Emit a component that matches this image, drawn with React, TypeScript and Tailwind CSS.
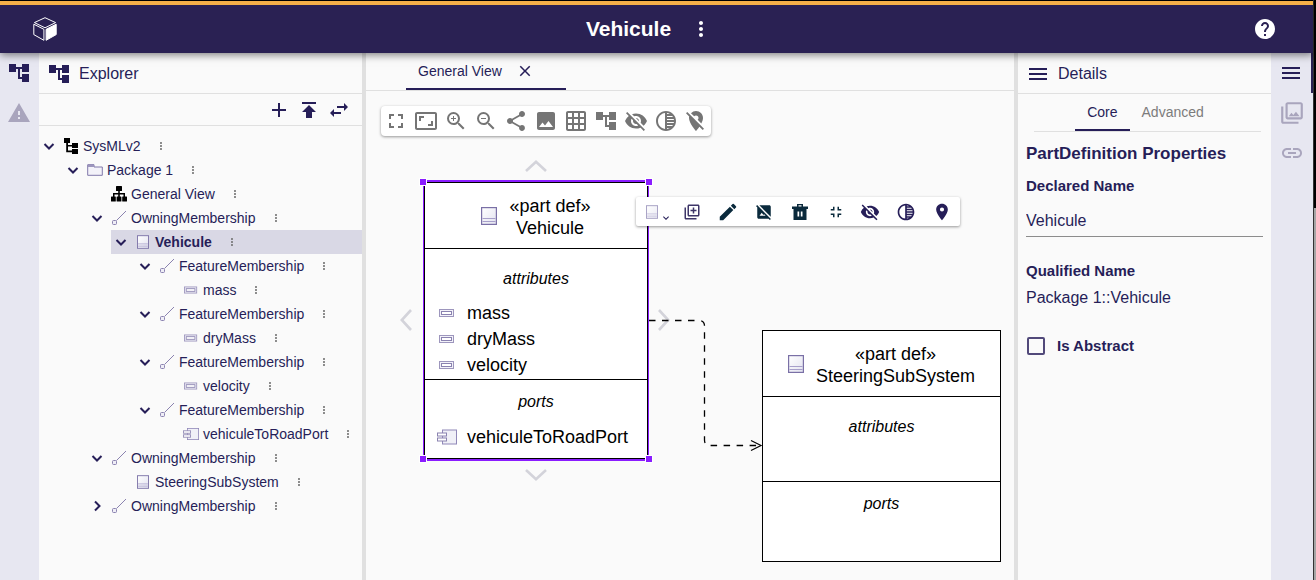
import React, { useState } from "react";
import {
  MdAccountTree,
  MdAdd,
  MdAspectRatio,
  MdClose,
  MdEdit,
  MdExpandMore,
  MdFullscreen,
  MdFullscreenExit,
  MdGridOn,
  MdHelp,
  MdHideImage,
  MdImage,
  MdLink,
  MdLocationOff,
  MdMenu,
  MdMoreVert,
  MdOutlineLibraryAdd,
  MdOutlinePhotoLibrary,
  MdPlace,
  MdPublish,
  MdShare,
  MdSwapHoriz,
  MdTonality,
  MdVisibilityOff,
  MdWarning,
  MdZoomIn,
  MdZoomOut,
} from "react-icons/md";

type IconProps = { className?: string };

function Logo() {
  return (
    <svg className="size-6" viewBox="0 0 24 24" fill="none" stroke="white" strokeWidth="1" strokeLinejoin="round">
      <path d="M12 .7 22.6 5.600 12 10.800 1.400 5.600Z" />
      <path d="M.8 7.200 10.900 12.300V23.300L.8 17.600Z" />
      <path d="M13.100 12.300 23.200 7.200V17.600L13.100 23.300Z" fill="white" />
    </svg>
  );
}

function PartIcon({ className }: IconProps) {
  return (
    <svg className={className} viewBox="0 0 16 18">
      <defs>
        <linearGradient id="part-fill" x1="0" y1="0" x2="1" y2="1">
          <stop offset="0" stopColor="#ffffff" />
          <stop offset="1" stopColor="#e2e2ef" />
        </linearGradient>
      </defs>
      <rect x=".6" y=".6" width="14.800" height="16.800" fill="url(#part-fill)" stroke="#7a70a6" strokeWidth="1.200" />
      <path d="M1.500 11.500H14.500M1.500 14.500H14.500" stroke="#a79fca" strokeWidth="1" />
    </svg>
  );
}

function AttributeIcon({ className }: IconProps) {
  return (
    <svg className={className} viewBox="0 0 16 16">
      <rect x=".5" y="4.500" width="14" height="7" fill="#f3f2f9" stroke="#9d96bd" />
      <rect x="2.500" y="6.500" width="10" height="3" fill="#fff" stroke="#8a82b0" />
    </svg>
  );
}

function PortIcon({ className }: IconProps) {
  return (
    <svg className={className} viewBox="0 0 20 16">
      <rect x="5.500" y="1" width="14" height="14" fill="#f0f0f7" stroke="#9088b8" />
      <rect x=".5" y="4" width="9" height="3" fill="#fff" stroke="#8a82b0" />
      <rect x=".5" y="9" width="9" height="3" fill="#fff" stroke="#8a82b0" />
    </svg>
  );
}

function MembershipIcon({ className }: IconProps) {
  return (
    <svg className={className} viewBox="0 0 16 16" fill="none">
      <path d="M5.500 10.500 15 1" stroke="#7d74a6" strokeWidth=".9" />
      <rect x="1.500" y="10.500" width="4" height="4" rx="1" fill="#efeef6" stroke="#8a82b0" />
    </svg>
  );
}

function PackageIcon({ className }: IconProps) {
  return (
    <svg className={className} viewBox="0 0 16 16">
      <path d="M.7 13.300V2.700H7V5H15.300V13.300Z" fill="#f3f2f9" stroke="#8078aa" />
      <path d="M1 3H7V5H1Z" fill="#9d96bd" />
    </svg>
  );
}

function ModelIcon({ className }: IconProps) {
  return (
    <svg className={className} viewBox="0 0 16 16" fill="black">
      <path d="M1 0H7V5H5V7H9V5H15V10H9V8.500H5V12.500H9V11H15V16H9V14.200H3.200V5H1Z" />
    </svg>
  );
}

function ViewIcon({ className }: IconProps) {
  return (
    <svg className={className} viewBox="0 0 16 16" fill="black">
      <rect x="5" y="0" width="6" height="5" rx=".5" />
      <path d="M7.200 5H8.800V7H14V11H12.500V8.500H8.800V11H7.200V8.500H3.500V11H2V7H7.200Z" />
      <rect x="0" y="10.500" width="4.800" height="5" rx=".5" />
      <rect x="5.600" y="10.500" width="4.800" height="5" rx=".5" />
      <rect x="11.200" y="10.500" width="4.800" height="5" rx=".5" />
    </svg>
  );
}

function TrashIcon({ className }: IconProps) {
  return (
    <svg className={className} viewBox="0 0 18 18" fill="currentColor" fillRule="evenodd">
      <path d="M6 1H12V3.500H17V6H1V3.500H6ZM7.500 2.300V3.500H10.500V2.300Z" />
      <path d="M2.500 6H15.500V17H2.500ZM6.500 8.500V13.500H8.200V8.500ZM9.800 8.500V13.500H11.500V8.500Z" />
    </svg>
  );
}

function ToggleIcon({ className }: IconProps) {
  return (
    <svg className={`size-4 ${className}`} viewBox="0 0 16 16" fill="none" stroke="currentColor" strokeWidth="2">
      <path d="M3.500 6 8 10.500 12.500 6" />
    </svg>
  );
}

type Kind = "model" | "package" | "view" | "membership" | "part" | "attribute" | "port";

const kindIcons: Record<Kind, React.ReactNode> = {
  model: <ModelIcon className="size-4" />,
  package: <PackageIcon className="size-4" />,
  view: <ViewIcon className="size-4" />,
  membership: <MembershipIcon className="size-4" />,
  part: <PartIcon className="h-3.5 w-3" />,
  attribute: <AttributeIcon className="size-3.5" />,
  port: <PortIcon className="h-3.5 w-4" />,
};

type Row = { level: number; kind: Kind; label: string; state?: "open" | "closed"; selected?: boolean };

const rows: Row[] = [
  { level: 0, kind: "model", label: "SysMLv2", state: "open" },
  { level: 1, kind: "package", label: "Package 1", state: "open" },
  { level: 2, kind: "view", label: "General View" },
  { level: 2, kind: "membership", label: "OwningMembership", state: "open" },
  { level: 3, kind: "part", label: "Vehicule", state: "open", selected: true },
  { level: 4, kind: "membership", label: "FeatureMembership", state: "open" },
  { level: 5, kind: "attribute", label: "mass" },
  { level: 4, kind: "membership", label: "FeatureMembership", state: "open" },
  { level: 5, kind: "attribute", label: "dryMass" },
  { level: 4, kind: "membership", label: "FeatureMembership", state: "open" },
  { level: 5, kind: "attribute", label: "velocity" },
  { level: 4, kind: "membership", label: "FeatureMembership", state: "open" },
  { level: 5, kind: "port", label: "vehiculeToRoadPort" },
  { level: 2, kind: "membership", label: "OwningMembership", state: "open" },
  { level: 3, kind: "part", label: "SteeringSubSystem" },
  { level: 2, kind: "membership", label: "OwningMembership", state: "closed" },
];

const indents = ["ml-0", "ml-6", "ml-12", "ml-18", "ml-24", "ml-30"];

function IconButton({ label, className = "", children }: { label: string; className?: string; children: React.ReactNode }) {
  return (
    <button type="button" aria-label={label} className={`flex shrink-0 items-center justify-center ${className}`}>
      {children}
    </button>
  );
}

function TreeRow({ row }: { row: Row }) {
  return (
    <li
      role="treeitem"
      aria-level={row.level + 1}
      aria-selected={!!row.selected}
      className={`flex h-6 items-center ${indents[row.level]} ${row.selected ? "bg-[#d9d8e5] font-bold" : ""}`}
    >
      <span className="flex w-6 shrink-0">
        {row.state && (
          <IconButton label={row.state === "open" ? "Collapse" : "Expand"} className="w-5">
            <ToggleIcon className={row.state === "open" ? "" : "-rotate-90"} />
          </IconButton>
        )}
      </span>
      <span className="flex w-5 shrink-0 items-center justify-center pr-1">{kindIcons[row.kind]}</span>
      <span className="whitespace-nowrap">{row.label}</span>
      <IconButton label={`${row.label} actions`} className="ml-3.5 text-[#757575]">
        <MdMoreVert className="size-3" />
      </IconButton>
    </li>
  );
}

function Explorer() {
  return (
    <aside className="flex w-[323px] shrink-0 flex-col">
      <header className="flex h-[41px] items-center gap-2 border-b border-[#e0e0e0] pt-px pl-2">
        <MdAccountTree className="size-6" />
        <h2 className="text-base">Explorer</h2>
      </header>
      <div className="flex h-8 items-center justify-end gap-1.5 border-b border-[#e0e0e0] pr-[11px]">
        <IconButton label="New model"><MdAdd className="size-6" /></IconButton>
        <IconButton label="Upload model"><MdPublish className="size-6" /></IconButton>
        <IconButton label="Synchronize"><MdSwapHoriz className="size-6" /></IconButton>
      </div>
      <ul role="tree" className="pt-2 text-sm">
        {rows.map((row, i) => (
          <TreeRow key={i} row={row} />
        ))}
      </ul>
    </aside>
  );
}

const diagramTools: [string, React.ReactNode][] = [
  ["Full screen", <MdFullscreen className="size-6" />],
  ["Fit to screen", <MdAspectRatio className="size-6" />],
  ["Zoom in", <MdZoomIn className="size-6" />],
  ["Zoom out", <MdZoomOut className="size-6" />],
  ["Share", <MdShare className="size-6" />],
  ["Export image", <MdImage className="size-6" />],
  ["Snap to grid", <MdGridOn className="size-6" />],
  ["Arrange all", <MdAccountTree className="size-6" />],
  ["Reveal hidden elements", <MdVisibilityOff className="size-6" />],
  ["Reveal faded elements", <MdTonality className="size-6" />],
  ["Unpin all", <MdLocationOff className="size-6" />],
];

const objectTools: [string, React.ReactNode][] = [
  ["New object", <MdOutlineLibraryAdd className="size-[18px] text-[#3d3568]" />],
  ["Edit", <MdEdit className="size-[22px] text-[#0a2a3c]" />],
  ["Delete from diagram", <MdHideImage className="size-[18px] text-[#0a2a3c]" />],
  ["Delete from model", <TrashIcon className="size-[18px] text-[#0a2a3c]" />],
  ["Collapse", <MdFullscreenExit className="size-[18px] text-[#0a2a3c]" />],
];

const displayTools: [string, React.ReactNode][] = [
  ["Hide", <MdVisibilityOff className="size-5" />],
  ["Fade", <MdTonality className="size-5" />],
  ["Pin", <MdPlace className="size-5" />],
];

function NodeHeader({ name }: { name: string }) {
  return (
    <div className="flex h-[66px] items-center justify-center gap-3 border-b border-black">
      <PartIcon className="h-[18px] w-4" />
      <p className="pt-0.5 text-center text-lg leading-[22px]">
        «part def»
        <br />
        {name}
      </p>
    </div>
  );
}

function NodeItem({ icon, label }: { icon: React.ReactNode; label: string }) {
  return (
    <li className="flex h-[26px] items-center text-lg">
      <span className="flex w-[42px] justify-center pl-0.5">{icon}</span>
      {label}
    </li>
  );
}

function Handle({ className }: IconProps) {
  return <span className={`absolute size-2 border border-white bg-[#8a1cff] ${className}`} />;
}

function Chevron({ className }: IconProps) {
  return (
    <svg className={`absolute h-3 w-6 ${className}`} viewBox="0 0 24 12" fill="none" stroke="#d3d3da" strokeWidth="2.600">
      <path d="M2 11 12 1.800 22 11" />
    </svg>
  );
}

function Diagram() {
  return (
    <div className="relative grow overflow-hidden text-black">
      <div
        role="toolbar"
        aria-label="Diagram"
        className="absolute top-[15px] left-[15px] flex h-[30px] items-center gap-1.5 rounded bg-white px-[3px] text-[#757575] shadow-[0_1px_3px_rgba(0,0,0,0.4)]"
      >
        {diagramTools.map(([label, icon]) => (
          <IconButton key={label} label={label}>{icon}</IconButton>
        ))}
      </div>

      <Chevron className="top-[69px] left-[158px]" />
      <Chevron className="top-[378px] left-[158px] rotate-180" />
      <Chevron className="top-[223px] left-[28px] -rotate-90" />
      <Chevron className="top-[223px] left-[286px] rotate-90" />

      <svg className="absolute top-[224px] left-[283px] h-[140px] w-[115px]" viewBox="0 0 115 140" fill="none" stroke="black">
        <path d="M0 5.500H50Q55.500 5.500 55.500 11V125Q55.500 130.500 61 130.500H112" strokeWidth="1.300" strokeDasharray="6.500 6.500" />
        <path d="M102 125.500 112 130.500 102 135.500" strokeWidth="1.200" />
      </svg>

      <section className="absolute top-[89px] left-[57px] w-[226px] border-x border-y-2 border-[#8a1cff] bg-white">
        <div className="border border-black">
          <NodeHeader name="Vehicule" />
          <div className="h-[131px] border-b border-black">
            <h3 className="pt-[18px] text-center text-base leading-6 italic">attributes</h3>
            <ul className="pt-[9px]">
              <NodeItem icon={<AttributeIcon className="size-4" />} label="mass" />
              <NodeItem icon={<AttributeIcon className="size-4" />} label="dryMass" />
              <NodeItem icon={<AttributeIcon className="size-4" />} label="velocity" />
            </ul>
          </div>
          <div className="h-[78px]">
            <h3 className="pt-2.5 text-center text-base leading-6 italic">ports</h3>
            <ul className="pt-2.5">
              <NodeItem icon={<PortIcon className="h-4 w-5" />} label="vehiculeToRoadPort" />
            </ul>
          </div>
        </div>
        <Handle className="-top-1 -left-[5px]" />
        <Handle className="-top-1 -right-[5px]" />
        <Handle className="-bottom-1 -left-[5px]" />
        <Handle className="-right-[5px] -bottom-1" />
      </section>

      <section className="absolute top-[239px] left-[396px] w-[239px] border border-black bg-white">
        <NodeHeader name="SteeringSubSystem" />
        <div className="h-[85px] border-b border-black">
          <h3 className="pt-[18px] text-center text-base leading-6 italic">attributes</h3>
        </div>
        <div className="h-[79px]">
          <h3 className="pt-2.5 text-center text-base leading-6 italic">ports</h3>
        </div>
      </section>

      <div
        role="toolbar"
        aria-label="Vehicule"
        className="absolute top-[106px] left-[270px] flex h-[29px] items-center rounded-xs bg-white pl-2 text-[#261e58] shadow-[0_1px_3px_rgba(0,0,0,0.4)]"
      >
        <IconButton label="Creation tools" className="w-[30px] gap-0.5">
          <PartIcon className="h-3.5 w-3 opacity-70" />
          <MdExpandMore className="mt-3 size-3" />
        </IconButton>
        <div className="flex">
          {objectTools.map(([label, icon]) => (
            <IconButton key={label} label={label} className="h-7 w-9">{icon}</IconButton>
          ))}
        </div>
        <div className="-ml-0.5 flex">
          {displayTools.map(([label, icon]) => (
            <IconButton key={label} label={label} className="h-7 w-9">{icon}</IconButton>
          ))}
        </div>
      </div>
    </div>
  );
}

function Details() {
  const [name, setName] = useState("Vehicule");
  return (
    <aside className="flex w-[253px] shrink-0 flex-col">
      <header className="flex h-[41px] items-center gap-2 border-b border-[#e0e0e0] pt-px pl-2">
        <MdMenu className="size-6" />
        <h2 className="text-base">Details</h2>
      </header>
      <div role="tablist" className="mr-2.5 ml-4 flex h-[38px] justify-center border-b border-[#e0e0e0] pr-1 text-sm">
        <button type="button" role="tab" aria-selected="true" className="border-b-2 border-[#261e58] px-3">Core</button>
        <button type="button" role="tab" aria-selected="false" className="border-b-2 border-transparent px-3 text-[#7c7c7c]">Advanced</button>
      </div>
      <form className="flex flex-col px-2 pt-2.5">
        <h3 className="text-[17px] leading-6 font-bold">PartDefinition Properties</h3>
        <label htmlFor="declared-name" className="mt-2.5 text-[15px] leading-5 font-bold">Declared Name</label>
        <input
          id="declared-name"
          value={name}
          onChange={(e) => setName(e.target.value)}
          className="mt-2 h-[33px] w-full border-b border-[#8c8c8c] pt-0.5 text-base outline-none"
        />
        <span className="mt-6 text-[15px] leading-5 font-bold">Qualified Name</span>
        <span className="mt-[5px] text-base">Package 1::Vehicule</span>
        <label className="mt-[25px] flex items-center gap-3 text-[15px] font-bold">
          <input type="checkbox" className="ml-px size-[18px] appearance-none rounded-xs border-2 border-[#51497a] checked:bg-[#51497a]" />
          Is Abstract
        </label>
      </form>
    </aside>
  );
}

export default function App() {
  return (
    <div className="flex min-h-screen bg-[#fafafa] font-['Liberation_Sans',Arial,sans-serif] text-[#261e58]">
      <div className="flex min-w-0 grow flex-col">
        <header className="relative z-10 grid h-[53px] shrink-0 grid-cols-3 items-center border-t border-black bg-[#2a2153] pt-1 text-white shadow-[0_2px_8px_rgba(0,0,0,0.5)]">
          <span className="absolute inset-x-0 top-0 h-1 bg-[#f5b048]" />
          <a href="#" aria-label="Home" className="ml-[33px] justify-self-start"><Logo /></a>
          <div className="flex items-center justify-center gap-1">
            <h1 className="text-[21px] leading-7 font-bold">Vehicule</h1>
            <IconButton label="More" className="w-13"><MdMoreVert className="size-6" /></IconButton>
          </div>
          <IconButton label="Help" className="mr-9 justify-self-end"><MdHelp className="size-6" /></IconButton>
        </header>

        <div className="flex grow">
          <nav className="flex w-[39px] shrink-0 flex-col bg-[#e7e7f1] pr-0.5">
            <IconButton label="Explorer" className="h-10"><MdAccountTree className="size-6" /></IconButton>
            <IconButton label="Validation" className="h-10 text-[#a9a5bd]"><MdWarning className="size-6" /></IconButton>
          </nav>
          <Explorer />
          <div className="w-1 shrink-0 bg-[#e0e0e0]" />
          <main className="flex min-w-0 grow flex-col">
            <div role="tablist" className="flex h-[38px] shrink-0 border-b border-[#e0e0e0] pl-10 text-sm">
              <div className="flex w-40 items-center border-b-2 border-[#261e58] pl-3">
                <button type="button" role="tab" aria-selected="true">General View</button>
                <IconButton label="Close" className="ml-3.5"><MdClose className="size-[18px]" /></IconButton>
              </div>
            </div>
            <Diagram />
          </main>
          <div className="w-1 shrink-0 bg-[#e0e0e0]" />
          <Details />
          <nav className="flex w-[42px] shrink-0 flex-col bg-[#e7e7f1]">
            <IconButton label="Details" className="h-10 border-r-2 border-[#2a2153]"><MdMenu className="size-6" /></IconButton>
            <IconButton label="Representations" className="h-10 text-[#a9a5bd]"><MdOutlinePhotoLibrary className="size-[26px]" /></IconButton>
            <IconButton label="Related elements" className="h-10 text-[#a9a5bd]"><MdLink className="size-6" /></IconButton>
          </nav>
        </div>
      </div>
      <div className="flex w-[3px] shrink-0 flex-col border-l border-[#333333] bg-[#a6a6a6]">
        <div className="h-52 bg-black" />
      </div>
    </div>
  );
}
